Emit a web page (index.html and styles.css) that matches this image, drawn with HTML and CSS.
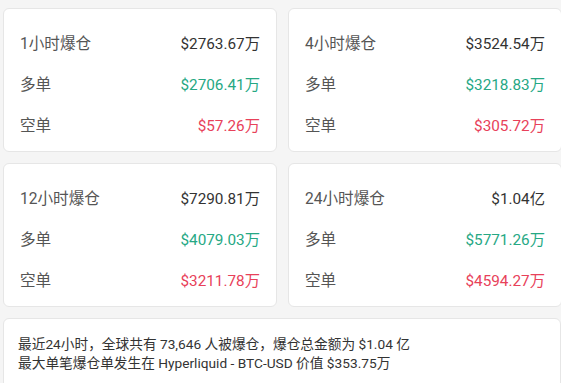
FILE: index.html
```html
<!DOCTYPE html>
<html lang="zh-CN">
<head>
<meta charset="utf-8">
<link rel="stylesheet" href="styles.css">
</head>
<body>
<div class="page">
  <div class="grid">
    <div class="card">
      <div class="row"><span class="label">1小时爆仓</span><span class="val">$2763.67万</span></div>
      <div class="row"><span class="label">多单</span><span class="val up">$2706.41万</span></div>
      <div class="row"><span class="label">空单</span><span class="val down">$57.26万</span></div>
    </div>
    <div class="card">
      <div class="row"><span class="label">4小时爆仓</span><span class="val">$3524.54万</span></div>
      <div class="row"><span class="label">多单</span><span class="val up">$3218.83万</span></div>
      <div class="row"><span class="label">空单</span><span class="val down">$305.72万</span></div>
    </div>
    <div class="card">
      <div class="row"><span class="label">12小时爆仓</span><span class="val">$7290.81万</span></div>
      <div class="row"><span class="label">多单</span><span class="val up">$4079.03万</span></div>
      <div class="row"><span class="label">空单</span><span class="val down">$3211.78万</span></div>
    </div>
    <div class="card">
      <div class="row"><span class="label">24小时爆仓</span><span class="val">$1.04亿</span></div>
      <div class="row"><span class="label">多单</span><span class="val up">$5771.26万</span></div>
      <div class="row"><span class="label">空单</span><span class="val down">$4594.27万</span></div>
    </div>
  </div>
  <div class="summary">
    <p>最近24小时，全球共有 73,646 人被爆仓，爆仓总金额为 $1.04 亿</p>
    <p>最大单笔爆仓单发生在 Hyperliquid - BTC-USD 价值 $353.75万</p>
  </div>
</div>
</body>
</html>
```

FILE: styles.css
```css
html, body {
  margin: 0;
  padding: 0;
  background: #f5f5f5;
  font-family: Roboto, "Noto Sans CJK SC", sans-serif;
  overflow: hidden;
}
.page {
  padding: 8px 0 0 3px;
  width: 561px;
  box-sizing: border-box;
}
.grid {
  display: grid;
  grid-template-columns: 274px 274px;
  column-gap: 11px;
  row-gap: 11px;
}
.card {
  background: #fff;
  border: 1px solid #e6e6e6;
  border-radius: 6px;
  padding: 12px 16px 7px 16px;
  height: 144px;
  box-sizing: border-box;
}
.row {
  display: flex;
  justify-content: space-between;
  align-items: center;
  height: 41px;
}
.label { color: #555; font-size: 15.6px; }
.val { color: #333; font-size: 15.3px; }
.up { color: #26a884; }
.down { color: #e8415a; }
.summary {
  margin-top: 11px;
  background: #fff;
  border: 1px solid #e6e6e6;
  border-radius: 6px;
  padding: 16px 14px 20px 14px;
  font-size: 13.7px;
  line-height: 19px;
  color: #333;
}
.summary p { margin: 0; }
```
